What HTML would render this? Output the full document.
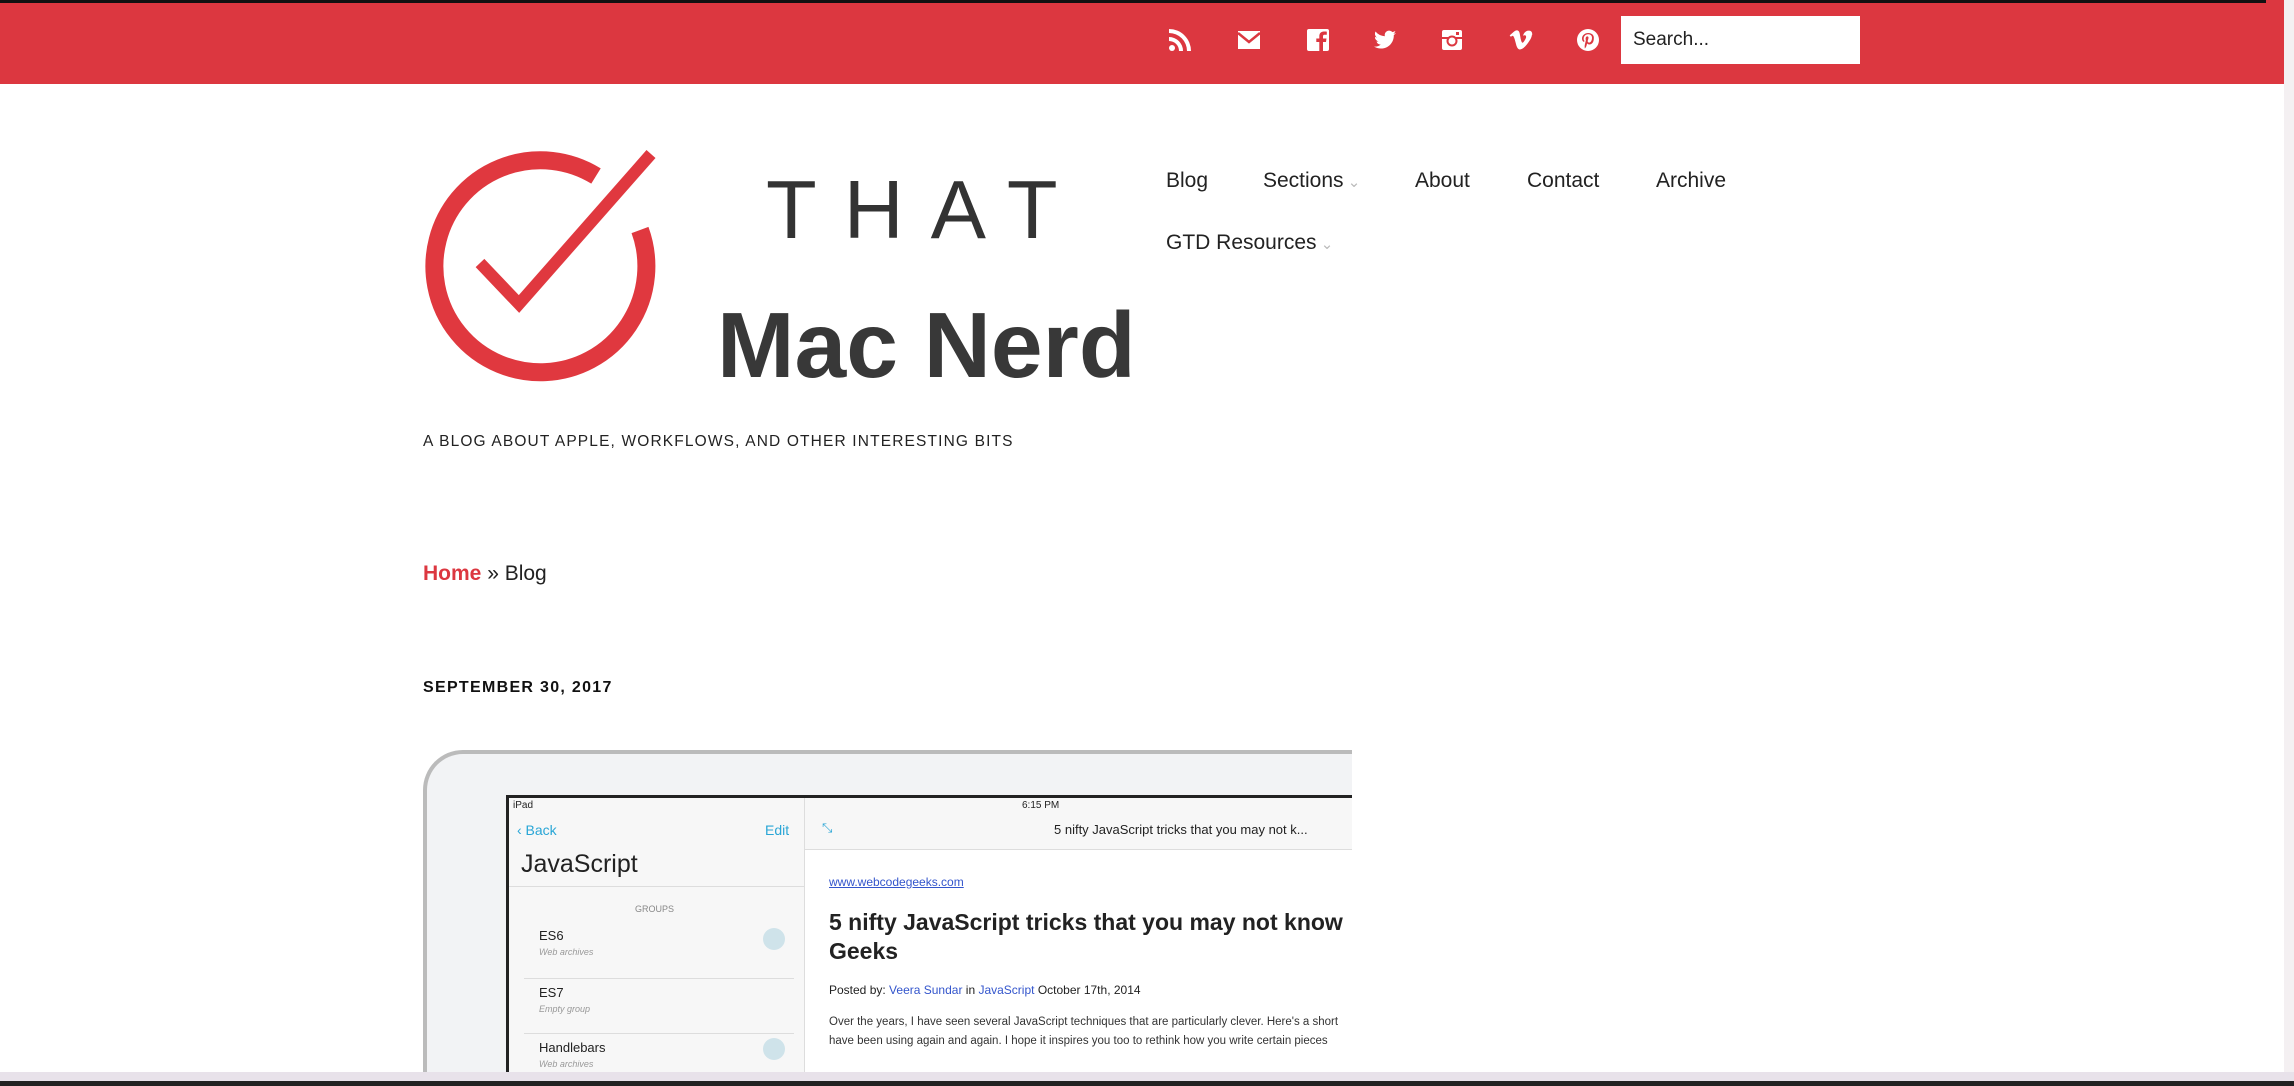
<!DOCTYPE html>
<html style="overflow:hidden"><head><meta charset="utf-8"><style>
*{margin:0;padding:0;box-sizing:border-box}
body{width:2294px;height:1086px;overflow:hidden;background:#fff;font-family:"Liberation Sans",sans-serif;position:relative;color:#222}
.a{position:absolute;white-space:nowrap}
.nav{font-size:21px;color:#222}
.ic{position:absolute;top:28px;width:24px;height:24px}
</style></head><body>
<div class="a" style="left:0;top:0;width:2284px;height:84px;background:#dc3740"></div>
<div class="a" style="left:0;top:0;width:2266px;height:3px;background:#111"></div>
<div class="a" style="left:2284px;top:0;width:10px;height:1086px;background:#f4f0f2"></div>
<svg class="ic" style="left:1168px" viewBox="0 0 24 24" fill="#fff"><circle cx="4" cy="20" r="3"/><path d="M1 9a14 14 0 0 1 14 14h-4A10 10 0 0 0 1 13z"/><path d="M1 1a22 22 0 0 1 22 22h-4A18 18 0 0 0 1 5z"/></svg>
<svg class="ic" style="left:1237px" viewBox="0 0 24 24" fill="#fff"><path d="M1 3h22v18H1z"/><path d="M1 5l11 9 11-9" stroke="#dc3740" stroke-width="2.5" fill="none"/></svg>
<svg class="ic" style="left:1306px" viewBox="0 0 24 24"><rect x="1" y="1" width="22" height="22" rx="2" fill="#fff"/><path d="M17 23v-9h3l.5-3.5H17V8.5c0-1 .3-1.7 1.8-1.7h2V3.6c-.4 0-1.5-.1-2.9-.1-2.8 0-4.6 1.7-4.6 4.8v2.2h-3V14h3v9z" fill="#dc3740"/></svg>
<svg class="ic" style="left:1373px" viewBox="0 0 24 24" fill="#fff"><path d="M23 5a9 9 0 0 1-2.6.7A4.5 4.5 0 0 0 22.4 3a9 9 0 0 1-2.9 1.1 4.5 4.5 0 0 0-7.7 4.1A12.8 12.8 0 0 1 2.5 3.5a4.5 4.5 0 0 0 1.4 6 4.5 4.5 0 0 1-2-.6 4.5 4.5 0 0 0 3.6 4.5 4.5 4.5 0 0 1-2 .1 4.5 4.5 0 0 0 4.2 3.1A9 9 0 0 1 1 18.5 12.8 12.8 0 0 0 8 20.5c8.3 0 12.8-6.9 12.8-12.8v-.6A9 9 0 0 0 23 5z"/></svg>
<svg class="ic" style="left:1440px" viewBox="0 0 24 24"><rect x="2" y="2" width="20" height="20" rx="2" fill="#fff"/><rect x="2" y="9" width="20" height="2" fill="#dc3740"/><circle cx="12" cy="13" r="4.5" fill="#fff" stroke="#dc3740" stroke-width="2"/><rect x="16" y="4" width="3" height="3" fill="#dc3740"/></svg>
<svg class="ic" style="left:1509px" viewBox="0 0 24 24" fill="#fff"><path d="M22.9 6.9c-.1 2.2-1.6 5.1-4.5 8.8-3 3.9-5.5 5.8-7.6 5.8-1.3 0-2.4-1.200-3.3-3.6L5.7 11.3C5 8.9 4.3 7.7 3.6 7.7c-.2 0-.8.4-1.8 1.1L.7 7.4l3.4-3c1.5-1.3 2.7-2 3.4-2 1.8-.2 2.9 1 3.3 3.6.5 2.8.8 4.6 1 5.3.5 2.3 1.1 3.4 1.700 3.4.5 0 1.2-.7 2.1-2.2.9-1.500 1.4-2.600 1.5-3.3.1-1.3-.4-1.9-1.5-1.9-.5 0-1.100.1-1.600.4 1.1-3.5 3.1-5.2 6.1-5.1 2.2.1 3.3 1.5 3.1 4.3z"/></svg>
<svg class="ic" style="left:1576px" viewBox="0 0 24 24"><circle cx="12" cy="12" r="11" fill="#fff"/><path d="M12.3 5c-4.2 0-6.3 3-6.3 5.5 0 1.5.6 2.9 1.8 3.4.2.1.4 0 .4-.2l.2-.7c.1-.2 0-.3-.1-.5-.4-.4-.6-1-.6-1.8 0-2.3 1.7-4.4 4.5-4.4 2.5 0 3.8 1.5 3.8 3.5 0 2.6-1.2 4.8-2.9 4.8-.9 0-1.6-.8-1.4-1.7.3-1.2.8-2.4.8-3.2 0-.7-.4-1.3-1.2-1.3-1 0-1.7 1-1.7 2.3 0 .8.3 1.4.3 1.4l-1.1 4.8c-.3 1.4 0 3.2 0 3.4 0 .1.1.1.2.1.1-.1 1.1-1.4 1.5-2.7l.6-2.3c.3.6 1.2 1.1 2.1 1.1 2.8 0 4.6-2.5 4.6-5.9C18.3 7.5 16.1 5 12.3 5z" fill="#dc3740"/></svg>
<div class="a" style="left:1621px;top:16px;width:239px;height:48px;background:#fff;font-size:19px;line-height:48px;padding-left:12px;color:#222">Search...</div>
<svg class="a" style="left:415px;top:140px" width="260" height="260" viewBox="415 140 260 260">
<path d="M596 176 A106 106 0 1 0 640 230" fill="none" stroke="#e0383f" stroke-width="18"/>
<path d="M480 263 L519 304 L651 154" fill="none" stroke="#e0383f" stroke-width="12"/>
</svg>
<div class="a" style="left:766px;top:168px;font-size:83px;line-height:83px;color:#333;letter-spacing:27px">THAT</div>
<div class="a" style="left:717px;top:299px;font-size:93px;line-height:93px;color:#383838;font-weight:bold">Mac Nerd</div>
<div class="a" style="left:423px;top:433px;font-size:15.5px;letter-spacing:1.15px;color:#222">A BLOG ABOUT APPLE, WORKFLOWS, AND OTHER INTERESTING BITS</div>
<div class="a nav" style="left:1166px;top:169px">Blog</div>
<div class="a nav" style="left:1263px;top:169px">Sections<span style="color:#bbb;font-size:15px"> ⌄</span></div>
<div class="a nav" style="left:1415px;top:169px">About</div>
<div class="a nav" style="left:1527px;top:169px">Contact</div>
<div class="a nav" style="left:1656px;top:169px">Archive</div>
<div class="a nav" style="left:1166px;top:231px">GTD Resources<span style="color:#bbb;font-size:15px"> ⌄</span></div>
<div class="a" style="left:423px;top:562px;font-size:21px"><b style="color:#dc3740">Home</b> » Blog</div>
<div class="a" style="left:423px;top:679px;font-size:16px;font-weight:bold;letter-spacing:1.3px;color:#111">SEPTEMBER 30, 2017</div>
<div class="a" style="left:423px;top:750px;width:929px;height:322px;overflow:hidden;background:#fff">
 <div class="a" style="left:0;top:0;width:1000px;height:400px;background:#f2f3f5;border-top:4px solid #bbb;border-left:4px solid #bbb;border-top-left-radius:40px"></div>
 <div class="a" style="left:83px;top:45px;width:900px;height:400px;background:#fff;border:3px solid #222">
  <div class="a" style="left:0;top:0;width:296px;height:400px;background:#f7f7f7;border-right:1px solid #ddd"></div>
  <div class="a" style="left:296px;top:0;width:600px;height:52px;background:#f7f7f7;border-bottom:1px solid #ddd"></div>
  <div class="a" style="left:4px;top:2px;font-size:10px">iPad</div>
  <div class="a" style="left:513px;top:2px;font-size:10px">6:15 PM</div>
  <div class="a" style="left:8px;top:24px;font-size:14px;color:#2aa6d6">‹ Back</div>
  <div class="a" style="left:256px;top:24px;font-size:14px;color:#2aa6d6">Edit</div>
  <div class="a" style="left:313px;top:22px;font-size:13px;color:#2aa6d6">⤡</div>
  <div class="a" style="left:545px;top:24px;font-size:13px">5 nifty JavaScript tricks that you may not k...</div>
  <div class="a" style="left:12px;top:52px;font-size:25px">JavaScript</div>
  <div class="a" style="left:0;top:88px;width:296px;height:1px;background:#ddd"></div>
  <div class="a" style="left:126px;top:106px;font-size:9px;color:#888">GROUPS</div>
  <div class="a" style="left:30px;top:130px;font-size:13px">ES6<br><i style="font-size:9px;color:#999">Web archives</i></div>
  <div class="a" style="left:254px;top:130px;width:22px;height:22px;border-radius:11px;background:#cfe3ea"></div>
  <div class="a" style="left:15px;top:180px;width:270px;height:1px;background:#ddd"></div>
  <div class="a" style="left:30px;top:187px;font-size:13px">ES7<br><i style="font-size:9px;color:#999">Empty group</i></div>
  <div class="a" style="left:15px;top:235px;width:270px;height:1px;background:#ddd"></div>
  <div class="a" style="left:30px;top:242px;font-size:13px">Handlebars<br><i style="font-size:9px;color:#999">Web archives</i></div>
  <div class="a" style="left:254px;top:240px;width:22px;height:22px;border-radius:11px;background:#cfe3ea"></div>
  <div class="a" style="left:320px;top:77px;font-size:12px;color:#35c;text-decoration:underline">www.webcodegeeks.com</div>
  <div class="a" style="left:320px;top:110px;font-size:23px;font-weight:bold;line-height:29px;color:#222">5 nifty JavaScript tricks that you may not know<br>Geeks</div>
  <div class="a" style="left:320px;top:185px;font-size:12px">Posted by: <span style="color:#35c">Veera Sundar</span> in <span style="color:#35c">JavaScript</span> October 17th, 2014</div>
  <div class="a" style="left:320px;top:215px;font-size:11.5px;line-height:19px;color:#333">Over the years, I have seen several JavaScript techniques that are particularly clever. Here's a short<br>have been using again and again. I hope it inspires you too to rethink how you write certain pieces</div>
 </div>
</div>
<div class="a" style="left:0;top:1072px;width:2294px;height:9px;background:#e8e2ea"></div>
<div class="a" style="left:0;top:1081px;width:2294px;height:5px;background:#222"></div>
</body></html>
